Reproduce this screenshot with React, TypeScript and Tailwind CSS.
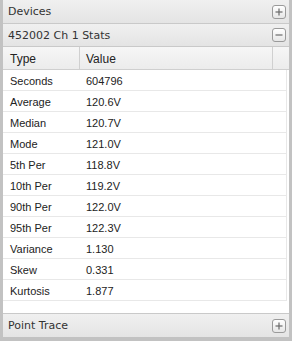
import React from 'react';

const rows: Array<[string, string]> = [
  ['Seconds', '604796'],
  ['Average', '120.6V'],
  ['Median', '120.7V'],
  ['Mode', '121.0V'],
  ['5th Per', '118.8V'],
  ['10th Per', '119.2V'],
  ['90th Per', '122.0V'],
  ['95th Per', '122.3V'],
  ['Variance', '1.130'],
  ['Skew', '0.331'],
  ['Kurtosis', '1.877'],
];

const ToggleButton: React.FC<{ open?: boolean }> = ({ open }) => (
  <div className="w-[14px] h-[14px] rounded-[3px] border border-[#9a9a9a] bg-gradient-to-b from-white to-[#e6e6e6] flex items-center justify-center">
    <svg width="8" height="8" viewBox="0 0 8 8">
      <path d="M0.5 4h7" stroke="#6a6a6a" strokeWidth="1.2" />
      {!open && <path d="M4 0.5v7" stroke="#6a6a6a" strokeWidth="1.2" />}
    </svg>
  </div>
);

const PanelHeader: React.FC<{ title: string; open?: boolean; className?: string }> = ({ title, open, className }) => (
  <div
    className={`flex items-center justify-between pl-[5px] pr-[3px] bg-gradient-to-b from-[#f0f0f0] to-[#e4e4e4] text-[11px] text-[#333] ${className ?? ''}`}
    style={{ fontFamily: '"DejaVu Sans", sans-serif' }}
  >
    <span className="pt-[2px]">{title}</span>
    <ToggleButton open={open} />
  </div>
);

export default function App() {
  return (
    <div className="w-[292px] h-[341px] bg-[#c2c2c2] px-[3px] pb-[4px] flex flex-col">
      <PanelHeader title="Devices" className="h-[24px] border-b border-[#c9c9c9]" />
      <PanelHeader title="452002 Ch 1 Stats" open className="h-[23px] border-b border-[#c9c9c9]" />

      <div className="flex-1 bg-white flex flex-col" style={{ fontFamily: '"Liberation Sans", Arial, sans-serif' }}>
        <div className="flex h-[23px] bg-gradient-to-b from-[#f6f6f6] to-[#ececec] border-b border-[#cfcfcf] text-[12px] text-[#222]">
          <div className="w-[77px] pl-[7px] pt-[2px] flex items-center border-r border-[#d0d0d0]">Type</div>
          <div className="w-[193px] pl-[6px] pt-[2px] flex items-center border-r border-[#d0d0d0]">Value</div>
          <div className="flex-1" />
        </div>
        {rows.map(([type, value]) => (
          <div
            key={type}
            className="flex h-[21px] w-[284px] items-center pt-[3px] border-b border-r border-[#e8e8e8] text-[11px] text-[#222]"
          >
            <div className="w-[77px] pl-[7px]">{type}</div>
            <div className="pl-[6px]">{value}</div>
          </div>
        ))}
        <div className="flex-1" />
      </div>

      <PanelHeader title="Point Trace" className="h-[24px] border-t border-[#c9c9c9]" />
    </div>
  );
}
